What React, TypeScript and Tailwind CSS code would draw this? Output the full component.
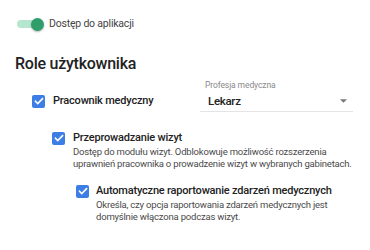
function Check() {
  return (
    <span className="flex h-[13px] w-[13px] shrink-0 items-center justify-center rounded-[2px] bg-[#3d7ee6]">
      <svg viewBox="0 0 24 24" className="h-[12px] w-[12px]" fill="none" stroke="white" strokeWidth={3.2} strokeLinecap="square">
        <path d="M5 12.5l4.5 4.5L19 7.5" />
      </svg>
    </span>
  );
}

export default function App() {
  return (
    <div className="h-[250px] w-[370px] overflow-hidden bg-white pl-[15px] pt-[17px] text-[#222] [font-family:Roboto,'Noto_Sans',sans-serif]">
      <div className="flex h-[14px] items-center">
        <div className="relative ml-[2px] h-[14px] w-[27px]">
          <div className="absolute left-0 top-[3px] h-[8px] w-[24px] rounded-full bg-[#b5e6cf]" />
          <div className="absolute left-[14px] top-[0.5px] h-[13px] w-[13px] rounded-full bg-[#2f9e6b] shadow-[0_1px_2px_rgba(0,0,0,0.3)]" />
        </div>
        <span className="ml-[5px] text-[10.5px] tracking-[-0.2px] text-[#444]">Dostęp do aplikacji</span>
      </div>

      <h2 className="mt-[23px] text-[16px] font-medium leading-[20px] tracking-[-0.25px]">Role użytkownika</h2>

      <div className="mt-[5px] flex items-start">
        <div className="ml-[17px] mt-[14px] flex w-[168px] items-center gap-[8px]">
          <Check />
          <span className="text-[11px] font-medium leading-[16px] tracking-[-0.2px]">Pracownik medyczny</span>
        </div>
        <div className="w-[153px] border-b border-[#e4e4e4] pb-[2px]">
          <div className="pl-[5px] text-[8.5px] leading-[12px] tracking-[-0.1px] text-[#8a8a8a]">Profesja medyczna</div>
          <div className="mt-[2px] flex h-[16px] items-center justify-between pl-[8px] pr-[6px]">
            <span className="text-[11.5px] font-medium leading-[16px] tracking-[-0.3px]">Lekarz</span>
            <svg viewBox="0 0 10 5" className="h-[4px] w-[7px]"><path d="M0 0h10L5 5z" fill="#777" /></svg>
          </div>
        </div>
      </div>

      <div className="ml-[37px] mt-[18px]">
        <div className="flex h-[16px] items-center gap-[8px]">
          <Check />
          <span className="text-[11px] font-medium leading-[16px] tracking-[-0.2px]">Przeprowadzanie wizyt</span>
        </div>
        <p className="ml-[21px] w-[290px] text-[9.5px] leading-[12px] tracking-[-0.2px] text-[#4a4a4a]">
          Dostęp do modułu wizyt. Odblokowuje możliwość rozszerzenia
          <br />
          uprawnień pracownika o prowadzenie wizyt w wybranych gabinetach.
        </p>

        <div className="ml-[24px] mt-[13px]">
          <div className="flex h-[16px] items-center gap-[7px]">
            <Check />
            <span className="whitespace-nowrap text-[11px] font-medium leading-[16px] tracking-[-0.2px]">
              Automatyczne raportowanie zdarzeń medycznych
            </span>
          </div>
          <p className="ml-[20px] w-[260px] text-[9.5px] leading-[12px] tracking-[-0.2px] text-[#4a4a4a]">
            Określa, czy opcja raportowania zdarzeń medycznych jest
            <br />
            domyślnie włączona podczas wizyt.
          </p>
        </div>
      </div>
    </div>
  );
}
